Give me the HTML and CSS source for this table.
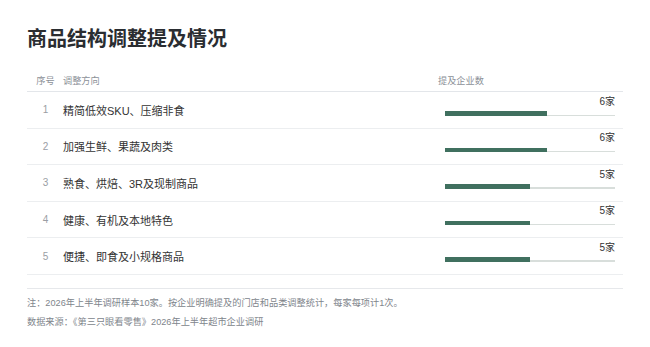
FILE: index.html
```html
<!DOCTYPE html>
<html lang="zh-CN">
<head>
<meta charset="utf-8">
<title>商品结构调整提及情况</title>
<link rel="stylesheet" href="styles.css">
</head>
<body>
<div class="page">
  <h1 class="title">商品结构调整提及情况</h1>
  <div class="table">
    <div class="row head">
      <div class="c-no">序号</div>
      <div class="c-name">调整方向</div>
      <div class="c-val">提及企业数</div>
    </div>
    <div class="row">
      <div class="c-no">1</div>
      <div class="c-name">精简低效SKU、压缩非食</div>
      <div class="c-bar"><div class="num">6家</div><div class="track"><div class="fill" style="width:60%"></div></div></div>
    </div>
    <div class="row">
      <div class="c-no">2</div>
      <div class="c-name">加强生鲜、果蔬及肉类</div>
      <div class="c-bar"><div class="num">6家</div><div class="track"><div class="fill" style="width:60%"></div></div></div>
    </div>
    <div class="row">
      <div class="c-no">3</div>
      <div class="c-name">熟食、烘焙、3R及现制商品</div>
      <div class="c-bar"><div class="num">5家</div><div class="track"><div class="fill" style="width:50%"></div></div></div>
    </div>
    <div class="row">
      <div class="c-no">4</div>
      <div class="c-name">健康、有机及本地特色</div>
      <div class="c-bar"><div class="num">5家</div><div class="track"><div class="fill" style="width:50%"></div></div></div>
    </div>
    <div class="row">
      <div class="c-no">5</div>
      <div class="c-name">便捷、即食及小规格商品</div>
      <div class="c-bar"><div class="num">5家</div><div class="track"><div class="fill" style="width:50%"></div></div></div>
    </div>
  </div>
  <div class="foot">
    <div>注：2026年上半年调研样本10家。按企业明确提及的门店和品类调整统计，每家每项计1次。</div>
    <div>数据来源：《第三只眼看零售》2026年上半年超市企业调研</div>
  </div>
</div>
</body>
</html>
```
FILE: styles.css
```css
html, body {
  margin: 0;
  padding: 0;
  background: #ffffff;
}
body {
  font-family: "Liberation Sans", "Noto Sans CJK SC", sans-serif;
  color: #333333;
}
.page {
  padding: 24px 27px 0 27px;
}
.title {
  margin: 0;
  font-size: 20px;
  line-height: 28px;
  font-weight: 700;
  color: #2a2d31;
  font-family: "Noto Sans CJK SC", sans-serif;
}
.table {
  margin-top: 16px;
}
.row {
  display: grid;
  grid-template-columns: 36px 375px 185px;
  height: 36.6px;
  box-sizing: border-box;
  border-bottom: 1px solid #eceef0;
  align-items: center;
}
.row.head {
  height: 24px;
  border-bottom: 1px solid #e3e6ea;
  font-size: 9.2px;
  color: #8b9097;
}
.c-no {
  text-align: center;
  padding: 0 7px 0 8px;
  color: #9a9ea4;
  font-size: 10px;
}
.head .c-no {
  font-size: 9.2px;
  color: #8b9097;
}
.c-name {
  font-size: 11px;
  color: #333333;
}
.head .c-name, .head .c-val {
  font-size: 9.2px;
  color: #8b9097;
}
.c-bar {
  align-self: start;
  padding: 3.5px 8px 0 7px;
}
.num {
  text-align: right;
  font-size: 10px;
  line-height: 12px;
  color: #333333;
}
.track {
  margin-top: 3.5px;
  height: 4.5px;
  background: linear-gradient(to bottom, transparent 3.5px, #d8dedb 3.5px);
}
.fill {
  height: 100%;
  background: #40705f;
}
.foot {
  margin-top: 13px;
  border-top: 1px solid #e6e8eb;
  padding-top: 5px;
  font-size: 9.2px;
  line-height: 19px;
  color: #80858c;
}
```
